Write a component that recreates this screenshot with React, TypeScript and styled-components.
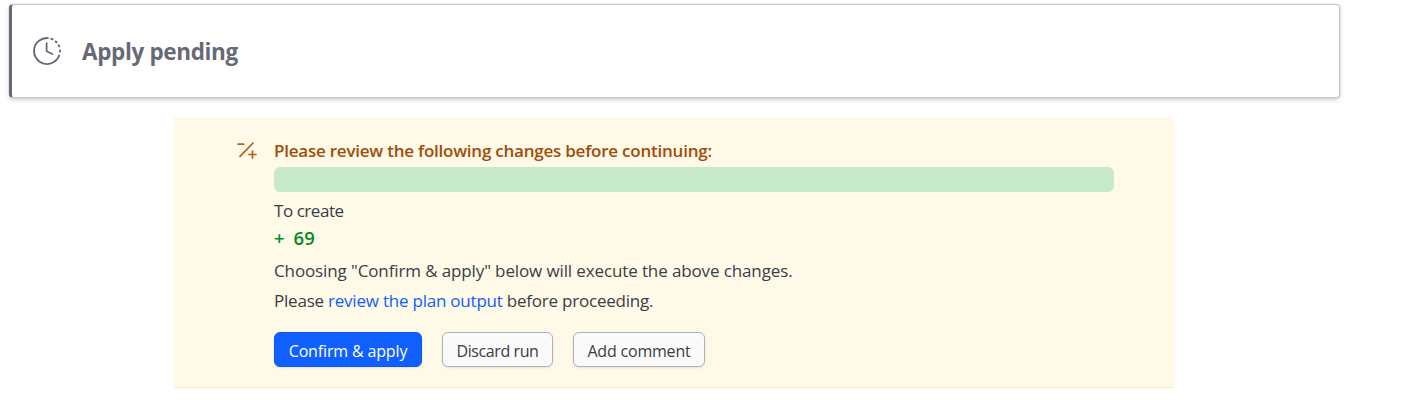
import React from "react";
import styled, { createGlobalStyle } from "styled-components";

const GlobalStyle = createGlobalStyle`
  * { box-sizing: border-box; }
  body {
    margin: 0;
    background: #fff;
    color: #3b3d45;
    font-family: "Segoe UI", "Open Sans", "Noto Sans", sans-serif;
    font-size: 17px;
  }
  p { margin: 0; }
`;

const Page = styled.main`
  width: 1340px;
  padding: 4px 0 0 9px;
`;

const StatusCard = styled.header`
  display: flex;
  align-items: center;
  height: 94px;
  padding-left: 20px;
  border: 1px solid #c2c5cb;
  border-left: 3px solid #656a76;
  border-radius: 4px;
  box-shadow: 0 0 1px rgba(101, 106, 118, 0.5), 0 2px 4px rgba(101, 106, 118, 0.3);
`;

const StatusIcon = styled.svg`
  width: 30px;
  height: 30px;
  margin-right: 20px;
  flex: none;
`;

const Text = styled.span<{ $spacing?: number }>`
  letter-spacing: ${({ $spacing = 0 }) => $spacing}px;
  white-space: nowrap;
`;

const Title = styled.h1`
  margin: 0;
  padding-top: 2px;
  color: #656a76;
  font-size: 22.5px;
  line-height: 32px;
  font-weight: 700;
`;

const ReviewPanel = styled.section`
  display: flex;
  width: 1000px;
  height: 271px;
  margin: 19px 0 0 165px;
  padding: 20px 60px 0 63px;
  background: #fff9e8;
  border-bottom: 1px solid #fbeabf;
`;

const ChangesIcon = styled.svg`
  width: 20px;
  height: 20px;
  margin: 3px 17px 0 0;
  flex: none;
`;

const Content = styled.div`
  flex: 1;
`;

const Heading = styled.h2`
  margin: 0;
  height: 30px;
  color: #a04d08;
  font-size: 17px;
  line-height: 27px;
  font-weight: 600;
`;

const ChangeBar = styled.div`
  height: 25px;
  border-radius: 6px;
  background: #c6e9c9;
`;

const Label = styled.p`
  margin-top: 5px;
  line-height: 28px;
`;

const Count = styled.p`
  color: #008a22;
  font-size: 18.5px;
  line-height: 25px;
  font-weight: 600;
  word-spacing: 3.5px;
`;

const Message = styled.p`
  line-height: 30px;
`;

const Messages = styled.div`
  margin-top: 6px;
`;

const PlanLink = styled.a`
  color: #1060ff;
  text-decoration: none;
`;

const Actions = styled.div`
  display: flex;
  gap: 20px;
  margin-top: 16px;
`;

const Button = styled.button<{ $primary?: boolean; $width: number }>`
  width: ${({ $width }) => $width}px;
  height: 35px;
  padding: 2px 0 0;
  border: 1px solid ${({ $primary }) => ($primary ? "#0c56e9" : "#aeb0b7")};
  border-radius: 6px;
  background: ${({ $primary }) => ($primary ? "#1060ff" : "#fafafa")};
  color: ${({ $primary }) => ($primary ? "#fff" : "#3b3d45")};
  box-shadow: 0 1px 2px rgba(101, 106, 118, 0.15);
  font: inherit;
  font-size: 16px;
`;

export default function App() {
  return (
    <>
      <GlobalStyle />
      <Page>
        <StatusCard>
          <StatusIcon viewBox="0 0 30 30" fill="none" stroke="#656a76" strokeWidth="1.8" strokeLinecap="round" strokeLinejoin="round">
            <path d="M16 2.05A13 13 0 1 0 27.2 19.5" />
            <path d="M19.5 2.9l1 .4M23.7 5.5l.8.8M26.7 9.4l.5.9M28 14.4v1.2" strokeWidth="2" />
            <path d="M14.6 7.2v8l5.8 2.8" />
          </StatusIcon>
          <Title><Text $spacing={-0.35}>Apply pending</Text></Title>
        </StatusCard>
        <ReviewPanel>
          <ChangesIcon viewBox="0 0 20 20" fill="none" stroke="#b45f1b" strokeWidth="1.7" strokeLinecap="round">
            <path d="M1.2 4.2h5.5M3 16.3L16 3M12 14.5h7M15.5 11v7" />
          </ChangesIcon>
          <Content>
            <Heading><Text $spacing={-0.23}>Please review the following changes before continuing:</Text></Heading>
            <ChangeBar />
            <Label><Text $spacing={-0.45}>To create</Text></Label>
            <Count><Text $spacing={0.25}>+ 69</Text></Count>
            <Messages>
              <Message><Text $spacing={-0.12}>Choosing "Confirm &amp; apply" below will execute the above changes.</Text></Message>
              <Message><Text $spacing={-0.22}>Please <PlanLink>review the plan output</PlanLink> before proceeding.</Text></Message>
            </Messages>
            <Actions>
              <Button $primary $width={148}><Text $spacing={-0.15}>Confirm &amp; apply</Text></Button>
              <Button $width={111}><Text $spacing={-0.4}>Discard run</Text></Button>
              <Button $width={132}><Text $spacing={-0.2}>Add comment</Text></Button>
            </Actions>
          </Content>
        </ReviewPanel>
      </Page>
    </>
  );
}
